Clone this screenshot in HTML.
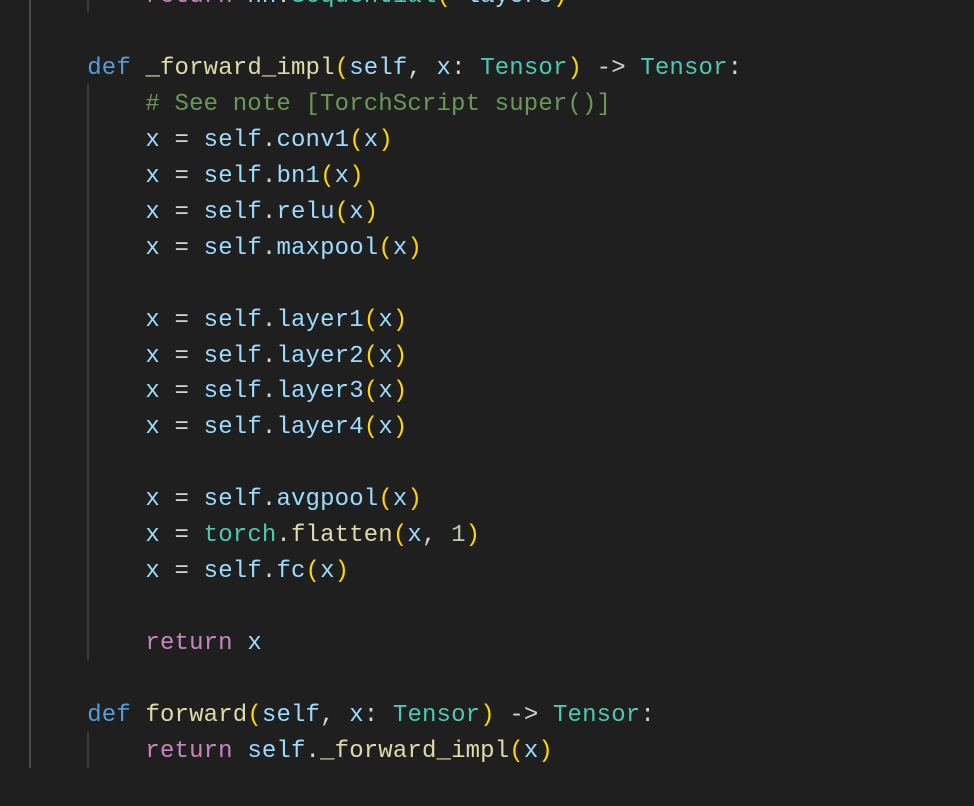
<!DOCTYPE html><html><head><style>
body{margin:0;background:#1f1f1f;width:974px;height:806px;overflow:hidden;position:relative}
pre{margin:0;position:absolute;left:29px;top:-21px;font-family:"Liberation Mono",monospace;font-size:24px;letter-spacing:0.15px;line-height:35.95px;color:#d4d4d4}
.k{color:#569cd6}.f{color:#dcdcaa}.v{color:#9cdcfe}.t{color:#4ec9b0}.c{color:#6a9955}.b{color:#ffd700}.r{color:#c586c0}.n{color:#b5cea8}.d{color:#da70d6}
.g{position:absolute;width:2px}
</style></head><body>
<div class="g" style="left:29px;top:0;height:768px;background:#4a4a4a"></div>
<div class="g" style="left:87px;top:0;height:12px;background:#3a3a3a"></div>
<div class="g" style="left:87px;top:84px;height:576px;background:#3a3a3a"></div>
<div class="g" style="left:87px;top:732px;height:36px;background:#3a3a3a"></div>
<pre>        <span class="r">return</span> <span class="v">nn</span>.<span class="t">Sequential</span><span class="b">(</span>*<span class="v">layers</span><span class="b">)</span>

    <span class="k">def</span> <span class="f">_forward_impl</span><span class="b">(</span><span class="v">self</span>, <span class="v">x</span>: <span class="t">Tensor</span><span class="b">)</span> -&gt; <span class="t">Tensor</span>:
        <span class="c"># See note [TorchScript super()]</span>
        <span class="v">x</span> = <span class="v">self</span>.<span class="v">conv1</span><span class="b">(</span><span class="v">x</span><span class="b">)</span>
        <span class="v">x</span> = <span class="v">self</span>.<span class="v">bn1</span><span class="b">(</span><span class="v">x</span><span class="b">)</span>
        <span class="v">x</span> = <span class="v">self</span>.<span class="v">relu</span><span class="b">(</span><span class="v">x</span><span class="b">)</span>
        <span class="v">x</span> = <span class="v">self</span>.<span class="v">maxpool</span><span class="b">(</span><span class="v">x</span><span class="b">)</span>

        <span class="v">x</span> = <span class="v">self</span>.<span class="v">layer1</span><span class="b">(</span><span class="v">x</span><span class="b">)</span>
        <span class="v">x</span> = <span class="v">self</span>.<span class="v">layer2</span><span class="b">(</span><span class="v">x</span><span class="b">)</span>
        <span class="v">x</span> = <span class="v">self</span>.<span class="v">layer3</span><span class="b">(</span><span class="v">x</span><span class="b">)</span>
        <span class="v">x</span> = <span class="v">self</span>.<span class="v">layer4</span><span class="b">(</span><span class="v">x</span><span class="b">)</span>

        <span class="v">x</span> = <span class="v">self</span>.<span class="v">avgpool</span><span class="b">(</span><span class="v">x</span><span class="b">)</span>
        <span class="v">x</span> = <span class="t">torch</span>.<span class="f">flatten</span><span class="b">(</span><span class="v">x</span>, <span class="n">1</span><span class="b">)</span>
        <span class="v">x</span> = <span class="v">self</span>.<span class="v">fc</span><span class="b">(</span><span class="v">x</span><span class="b">)</span>

        <span class="r">return</span> <span class="v">x</span>

    <span class="k">def</span> <span class="f">forward</span><span class="b">(</span><span class="v">self</span>, <span class="v">x</span>: <span class="t">Tensor</span><span class="b">)</span> -&gt; <span class="t">Tensor</span>:
        <span class="r">return</span> <span class="v">self</span>.<span class="f">_forward_impl</span><span class="b">(</span><span class="v">x</span><span class="b">)</span>
</pre>
</body></html>
